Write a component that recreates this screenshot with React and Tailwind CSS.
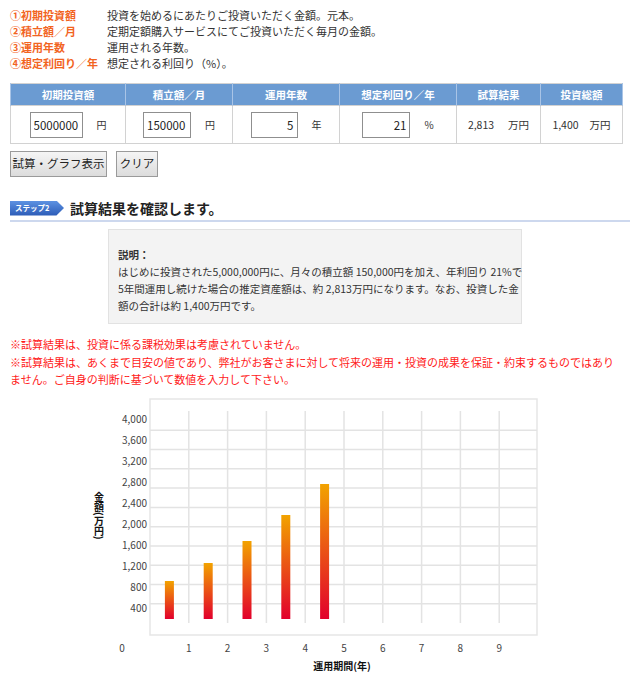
const notes = [
  ["①初期投資額", "投資を始めるにあたりご投資いただく金額。元本。"],
  ["②積立額／月", "定期定額購入サービスにてご投資いただく毎月の金額。"],
  ["③運用年数", "運用される年数。"],
  ["④想定利回り／年", "想定される利回り（%）。"],
];

const headers = ["初期投資額", "積立額／月", "運用年数", "想定利回り／年", "試算結果", "投資総額"];
const colWidths = ["w-[115px]", "w-[107px]", "w-[107px]", "w-[117px]", "w-[84px]", "w-[82px]"];

const bars = [579, 561, 539, 513, 482];
const yLabels = ["4,000", "3,600", "3,200", "2,800", "2,400", "2,000", "1,600", "1,200", "800", "400"];

function Field({ value, unit, width, right }) {
  return (
    <div className="flex items-center justify-center gap-[14px]">
      <input
        readOnly
        value={value}
        className={`h-[26px] ${width} border border-[#8f8f8f] bg-white px-[3px] text-[11.5px] text-[#222] outline-none ${right ? "text-right" : ""}`}
      />
      <span className="text-[10px] text-[#333]">{unit}</span>
    </div>
  );
}

function Result({ value, gap }) {
  return (
    <div className={`flex items-center justify-center text-[10.5px] text-[#333] ${gap}`}>
      <span>{value}</span>
      <span>万円</span>
    </div>
  );
}

function Chart() {
  // page y -> svg y: minus 390
  const oy = 390;
  const step = 38.8;
  return (
    <svg width="640" height="289" viewBox={`0 ${oy} 640 289`} className="block">
      <defs>
        <linearGradient id="bar" x1="0" y1="0" x2="0" y2="1">
          <stop offset="0" stopColor="#f2a300" />
          <stop offset="1" stopColor="#e2002c" />
        </linearGradient>
      </defs>
      <rect x="150" y="397" width="387" height="236" fill="white" stroke="#e6e6e6" strokeWidth="1.5" />
      {Array.from({ length: 10 }, (_, i) => (
        <line key={"h" + i} x1="150" x2="537" y1={428.3 + i * 19.27} y2={428.3 + i * 19.27} stroke="#e3e3e3" strokeWidth="1.5" />
      ))}
      {Array.from({ length: 9 }, (_, i) => (
        <line key={"v" + i} x1={150 + step * (i + 1)} x2={150 + step * (i + 1)} y1="409" y2="621" stroke="#e3e3e3" strokeWidth="1.5" />
      ))}
      {bars.map((top, i) => (
        <rect key={i} x={150 + step * (i + 0.5) - 4.5} y={top} width="9" height={617 - top} fill="url(#bar)" />
      ))}
      <g fontFamily='"Noto Sans CJK JP", sans-serif' fontSize="10" fill="#444">
        {yLabels.map((l, i) => (
          <text key={l} x="147" y={420.5 + i * 21.1} textAnchor="end">{l}</text>
        ))}
        <text x="122" y="649.5" textAnchor="middle">0</text>
        {Array.from({ length: 9 }, (_, i) => (
          <text key={i} x={150 + step * (i + 1)} y="649.5" textAnchor="middle">{i + 1}</text>
        ))}
      </g>
      <g fontFamily='"Noto Sans CJK JP", sans-serif' fontSize="10" fontWeight="700" fill="#111">
        <text x="99" y="490" style={{ writingMode: "vertical-rl" }}>金額(万円)</text>
        <text x="342" y="667.5" textAnchor="middle">運用期間(年)</text>
      </g>
    </svg>
  );
}

export default function App() {
  return (
    <div className="min-h-[679px] w-[640px] bg-white font-['Noto_Sans_CJK_JP',sans-serif] text-[#333]">
      <div className="pt-[7px] pl-[10px]">
        {notes.map(([label, desc]) => (
          <div key={label} className="flex h-[16px] items-center text-[11px]">
            <span className="w-[97px] shrink-0 font-bold text-[#f2641f]">{label}</span>
            <span>{desc}</span>
          </div>
        ))}
      </div>

      <table className="mt-[12px] ml-[10px] w-[612px] table-fixed border-collapse border border-[#d2d2d2]">
        <colgroup>
          {colWidths.map((w, i) => (
            <col key={i} className={w} />
          ))}
        </colgroup>
        <thead>
          <tr className="h-[22px] bg-[#6b9bd2]">
            {headers.map((h) => (
              <th key={h} className="border-x border-[#a9c4e6] p-0 text-[10.5px] font-bold text-white">
                {h}
              </th>
            ))}
          </tr>
        </thead>
        <tbody>
          <tr className="h-[38px]">
            <td className="border border-[#d2d2d2] p-0">
              <Field value="5000000" unit="円" width="w-[53px]" />
            </td>
            <td className="border border-[#d2d2d2] p-0">
              <Field value="150000" unit="円" width="w-[48px]" />
            </td>
            <td className="border border-[#d2d2d2] p-0">
              <Field value="5" unit="年" width="w-[47px]" right />
            </td>
            <td className="border border-[#d2d2d2] p-0">
              <Field value="21" unit="%" width="w-[48px]" right />
            </td>
            <td className="border border-[#d2d2d2] p-0">
              <Result value="2,813" gap="gap-[14px]" />
            </td>
            <td className="border border-[#d2d2d2] p-0">
              <Result value="1,400" gap="gap-[11px]" />
            </td>
          </tr>
        </tbody>
      </table>

      <div className="mt-[7px] ml-[10px] flex gap-[9px]">
        <button className="h-[26px] w-[97px] border border-[#9a9a9a] bg-gradient-to-b from-[#f5f5f5] to-[#dcdcdc] text-[11.5px] text-[#222]">
          試算・グラフ表示
        </button>
        <button className="h-[26px] w-[42px] border border-[#9a9a9a] bg-gradient-to-b from-[#f5f5f5] to-[#dcdcdc] text-[11.5px] text-[#222]">
          クリア
        </button>
      </div>

      <div className="mx-[10px] mt-[23px] flex items-center gap-[6px] border-b-2 border-[#cdd8ee] pb-[4px]">
        <span className="flex h-[15px] w-[54px] items-center bg-gradient-to-b from-[#5d92e2] to-[#2c5bb6] pl-[5px] text-[7.5px] font-bold text-white [clip-path:polygon(0_0,86%_0,100%_50%,86%_100%,0_100%)]">
          ステップ2
        </span>
        <h2 className="h-[16px] text-[14px] leading-[16px] font-semibold text-[#222]">試算結果を確認します。</h2>
      </div>

      <div className="mt-[7px] ml-[108px] w-[414px] border border-[#e2e2e2] bg-[#f3f3f3] pt-[16px] pb-[9px] pl-[9px] text-[10.5px] leading-[17px] text-[#333]">
        <p className="font-bold">説明：</p>
        <p className="whitespace-nowrap">はじめに投資された5,000,000円に、月々の積立額 150,000円を加え、年利回り 21%で</p>
        <p className="whitespace-nowrap">5年間運用し続けた場合の推定資産額は、約 2,813万円になります。なお、投資した金</p>
        <p className="whitespace-nowrap">額の合計は約 1,400万円です。</p>
      </div>

      <div className="mt-[12px] px-[10px] text-[11px] leading-[17.5px] text-[#ff1a1a]">
        <p>※試算結果は、投資に係る課税効果は考慮されていません。</p>
        <p className="whitespace-nowrap">※試算結果は、あくまで目安の値であり、弊社がお客さまに対して将来の運用・投資の成果を保証・約束するものではあり</p>
        <p>ません。ご自身の判断に基づいて数値を入力して下さい。</p>
      </div>

      <div className="mt-[3px]">
        <Chart />
      </div>
    </div>
  );
}
